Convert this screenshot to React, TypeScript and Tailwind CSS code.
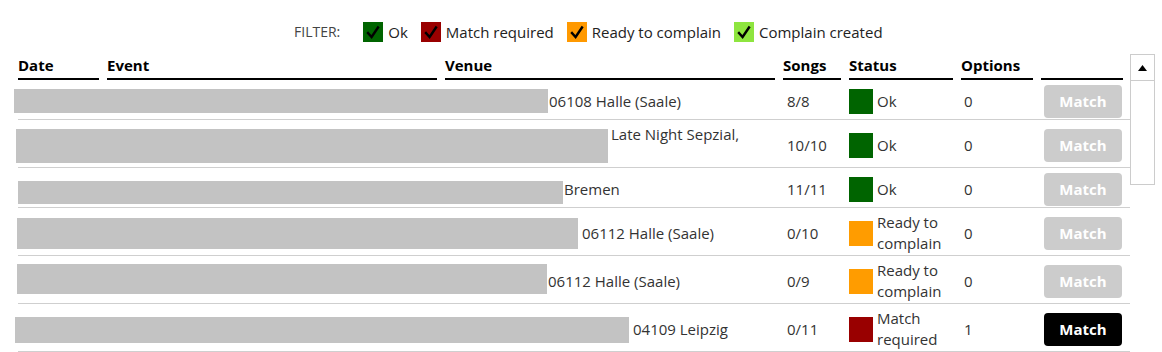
import React from "react";

type Row = {
  venue: string;
  venuePad: string;
  twoLineVenue?: boolean;
  songs: string;
  status: "ok" | "ready" | "match";
  options: string;
  box: string;
};

const rows: Row[] = [
  { venue: "06108 Halle (Saale)", venuePad: "pl-[104px]", songs: "8/8", status: "ok", options: "0", box: "left-[-4px] top-[9px] w-[534px] h-[24px]" },
  { venue: "Late Night Sepzial,", venuePad: "pl-[166px]", twoLineVenue: true, songs: "10/10", status: "ok", options: "0", box: "left-[-2px] top-[9px] w-[592px] h-[34px]" },
  { venue: "Bremen", venuePad: "pl-[119px]", songs: "11/11", status: "ok", options: "0", box: "left-[0px] top-[13px] w-[545px] h-[23px]" },
  { venue: "06112 Halle (Saale)", venuePad: "pl-[137px]", songs: "0/10", status: "ready", options: "0", box: "left-[-1px] top-[10px] w-[561px] h-[31px]" },
  { venue: "06112 Halle (Saale)", venuePad: "pl-[103px]", songs: "0/9", status: "ready", options: "0", box: "left-[-1px] top-[8px] w-[530px] h-[30px]" },
  { venue: "04109 Leipzig", venuePad: "pl-[188px]", songs: "0/11", status: "match", options: "1", box: "left-[-3px] top-[13px] w-[614px] h-[26px]" },
];

const Check = () => (
  <svg width="20" height="20" viewBox="0 0 20 20" className="block">
    <path d="M5 11 L8.6 15 L15 5.5" fill="none" stroke="#000" strokeWidth="2.4" strokeLinecap="square" />
  </svg>
);

const FilterItem = ({ color, label }: { color: string; label: string }) => (
  <div className="flex items-center gap-[5px]">
    <div className={`w-[20px] h-[20px] ${color}`}>
      <Check />
    </div>
    <span className="text-[15px] text-[#222] leading-[20px]">{label}</span>
  </div>
);

const StatusCell = ({ status }: { status: Row["status"] }) => {
  const color = status === "ok" ? "bg-[#006400]" : status === "ready" ? "bg-[#ff9c00]" : "bg-[#990000]";
  const label = status === "ok" ? "Ok" : status === "ready" ? "Ready to complain" : "Match required";
  return (
    <div className="flex items-center gap-[4px]">
      <div className={`w-[24px] h-[25px] shrink-0 ${color}`} />
      <span className="leading-[21px]">{label}</span>
    </div>
  );
};

export default function App() {
  const grid = "grid grid-cols-[81px_330px_330px_58px_104px_72px_82px] gap-x-[8px]";
  return (
    <div className="w-[1162px] h-[352px] bg-white overflow-hidden" style={{ fontFamily: '"Open Sans", "Noto Sans", sans-serif' }}>
      <div className="flex items-center pl-[294px] pt-[22px] h-[42px]">
        <span className="text-[14px] text-[#444] mr-[23px] leading-[20px]">FILTER:</span>
        <div className="flex items-center gap-[13px]">
          <FilterItem color="bg-[#006400]" label="Ok" />
          <FilterItem color="bg-[#990000]" label="Match required" />
          <FilterItem color="bg-[#ff9900]" label="Ready to complain" />
          <FilterItem color="bg-[#8ee53f]" label="Complain created" />
        </div>
      </div>
      <div className="flex mt-[12px]">
        <div className="ml-[18px] w-[1112px] text-[15px] text-[#333]">
          <div className={`${grid} font-bold text-black`}>
            {["Date", "Event", "Venue", "Songs", "Status", "Options", ""].map((h, i) => (
              <div key={i} className="pt-[1px] pb-[3px] leading-[20px] h-[26px] border-b-2 border-black">
                {h}
              </div>
            ))}
          </div>
          {rows.map((r, i) => (
            <div key={i} className="relative border-b border-[#cfcfcf]">
              <div className={`${grid} items-center pt-[4px] pb-[1px] min-h-[39px]`}>
                <div />
                <div />
                <div className={`${r.venuePad} leading-[21px] whitespace-nowrap`}>
                  <div>{r.venue}</div>
                  {r.twoLineVenue && <div>&nbsp;</div>}
                </div>
                <div className="pl-[4px] leading-[21px]">{r.songs}</div>
                <StatusCell status={r.status} />
                <div className="pl-[3px] leading-[21px]">{r.options}</div>
                <div className="flex justify-end pr-[1px]">
                  <button
                    className={`w-[78px] h-[33px] rounded-[4px] font-bold text-[15px] text-white ${
                      r.status === "match" ? "bg-black" : "bg-[#cccccc]"
                    }`}
                  >
                    Match
                  </button>
                </div>
              </div>
              <div className={`absolute bg-[#c3c3c3] ${r.box}`} />
            </div>
          ))}
        </div>
        <div className="w-[25px] h-[131px] border border-[#cccccc] self-start">
          <div className="h-[26px] border-b border-[#cccccc] flex items-center justify-center">
            <svg width="9" height="6" viewBox="0 0 9 6">
              <path d="M0 6 L4.5 0 L9 6 Z" fill="#000" />
            </svg>
          </div>
        </div>
      </div>
    </div>
  );
}
